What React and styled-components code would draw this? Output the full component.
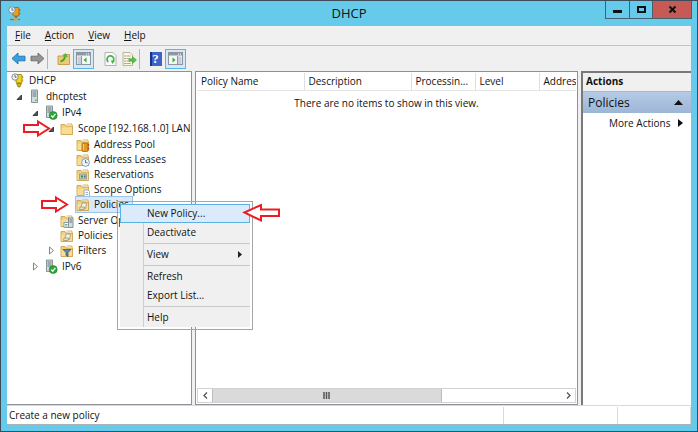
import React from "react";
import styled, { createGlobalStyle } from "styled-components";

const GlobalStyle = createGlobalStyle`
  * {
    box-sizing: border-box;
  }
  body {
    margin: 0;
    font-family: "Open Sans", "Noto Sans", sans-serif;
    font-size: 10px;
    line-height: 15px;
    color: #111;
  }
  button {
    font: inherit;
    color: inherit;
    border: none;
    background: none;
    padding: 0;
    margin: 0;
  }
  svg {
    display: block;
    flex: none;
  }
`;

const Window = styled.div`
  display: flex;
  flex-direction: column;
  min-height: 100vh;
  padding: 0 6px 6px;
  border: 1px solid #3d4c58;
  background: #66cbea;
`;

const TitleBar = styled.header`
  display: grid;
  grid-template-columns: 1fr auto 1fr;
  align-items: center;
  height: 25px;

  h1 {
    margin: 0;
    font-size: 13px;
    font-weight: 400;
  }
`;

const TitleIcon = styled.span`
  padding-left: 1px;
`;

const WindowButtons = styled.div`
  display: flex;
  align-self: start;
  justify-self: end;
  margin-right: -1px;
  border: 1px solid #46606d;
  border-top: none;
`;

const WindowButton = styled.button`
  display: flex;
  align-items: center;
  justify-content: center;
  width: ${(props) => (props.$close ? 39 : 23)}px;
  height: 17px;
  background: ${(props) => (props.$close ? "#c75a55" : "#66cbea")};

  & + & {
    border-left: 1px solid #46606d;
  }
`;

const Client = styled.div`
  display: flex;
  flex-direction: column;
  flex: 1;
  background: #f0f0f0;
`;

const MenuBar = styled.nav`
  display: flex;
  gap: 14px;
  height: 20px;
  padding: 2px 8px;
  border-bottom: 1px solid #c4c4c4;

  button::first-letter {
    text-decoration: underline;
  }
`;

const ToolBar = styled.div`
  display: flex;
  align-items: center;
  gap: 6px;
  height: 25px;
  padding: 0 2px;
`;

const ToolGroup = styled.div`
  display: flex;

  &:not(:last-child) {
    border-right: 1px solid ${(props) => (props.$divided ? "#b5b5b5" : "transparent")};
  }
`;

const ToolButton = styled.button`
  display: flex;
  align-items: center;
  justify-content: center;
  width: ${(props) => (props.$pressed ? 21 : 19)}px;
  height: 20px;
  border: 1px solid ${(props) => (props.$pressed ? "#5bb4e5" : "transparent")};
  background: ${(props) => (props.$pressed ? "#d4e9f8" : "transparent")};
`;

const Panes = styled.div`
  display: grid;
  grid-template-columns: 185px minmax(0, 1fr) 110px;
  gap: 3px;
  flex: 1;
`;

const Pane = styled.section`
  display: flex;
  flex-direction: column;
  min-width: 0;
  background: #fff;
  border: 1px solid #8d9299;
`;

const TreePane = styled(Pane)`
  border-left: none;
`;

const ListPane = styled(Pane)`
  padding: 1px;
`;

const ActionsPane = styled(Pane)`
  border-width: 2px 0 0 2px;
  border-color: #77797c;
`;

const Branch = styled.ul`
  list-style: none;
  margin: 0;
  padding: 1px 0 1px ${(props) => props.$indent}px;
`;

const Row = styled.div`
  position: relative;
  display: flex;
  align-items: center;
  height: 15px;
  white-space: nowrap;
`;

const Twisty = styled.button`
  display: flex;
  align-items: center;
  flex: none;
  width: 12px;
  height: 15px;
`;

const TwistySpace = styled.span`
  flex: none;
  width: 12px;
`;

const NodeLabel = styled.span`
  display: flex;
  align-items: center;
  gap: 4px;
  height: 15px;
  padding-right: 3px;
  background: ${(props) => (props.$selected ? "#d9e9fb" : "none")};
  box-shadow: ${(props) => (props.$selected ? "0 0 0 1px #9cc3ea" : "none")};
`;

const Callout = styled.svg`
  position: absolute;
  z-index: 3;
  top: -1px;
  left: ${(props) => props.$left}px;
  overflow: visible;
`;

const ContextMenu = styled.div`
  position: absolute;
  z-index: 2;
  top: 4px;
  left: 53px;
  width: 136px;
  padding: 2px;
  border: 1px solid #a5a5a5;
  background: linear-gradient(to right, #f0f0f0 23px, #cfcfcf 23px, #cfcfcf 24px, #f0f0f0 24px)
    content-box #f0f0f0;
`;

const ContextItem = styled.button`
  display: flex;
  align-items: center;
  justify-content: space-between;
  width: 100%;
  height: 19px;
  padding: 0 7px 0 27px;
  text-align: left;
  background: ${(props) => (props.$active ? "#dcebfc" : "transparent")};
  box-shadow: ${(props) => (props.$active ? "inset 0 0 0 1px #5bb1e2" : "none")};
`;

const ContextDivider = styled.hr`
  height: 1px;
  margin: 1px 0 1px 24px;
  border: none;
  background: #c9c9c9;
`;

const PointerSpot = styled.div`
  position: absolute;
  top: 3px;
  left: 125px;
`;

const ListTable = styled.table`
  width: 100%;
  table-layout: fixed;
  border-collapse: collapse;

  th {
    height: 17px;
    padding: 0 0 0 4px;
    overflow: hidden;
    font-weight: 400;
    text-align: left;
    white-space: nowrap;
    border-right: 1px solid #dedede;
    border-bottom: 1px solid #e4e4e4;
  }
  th:last-child {
    border-right: none;
  }
  td {
    padding: 5px 0 0;
    text-align: center;
  }
`;

const ScrollBar = styled.div`
  display: flex;
  height: 15px;
  margin-top: auto;
  border: 1px solid #d2d2d2;
`;

const ScrollButton = styled.button`
  display: flex;
  align-items: center;
  justify-content: center;
  width: 14px;
`;

const ScrollThumb = styled.div`
  display: flex;
  align-items: center;
  justify-content: center;
  width: 61%;
  margin-right: auto;
  border: solid #bdbdbd;
  border-width: 0 1px;
  background: #dadada;
`;

const ActionsTitle = styled.h2`
  margin: 0;
  padding: 1px 3px 2px;
  font-size: 10px;
  font-weight: 700;
  line-height: 15px;
  background: #f0f0f0;
  border-bottom: 1px solid #b5b5b5;
`;

const ActionsGroup = styled.button`
  display: flex;
  align-items: center;
  justify-content: space-between;
  height: 21px;
  padding: 0 8px 0 5px;
  font-size: 12px;
  background: linear-gradient(#b5cbe6, #9cb6d6);
`;

const ActionsLink = styled.button`
  display: flex;
  align-items: center;
  justify-content: space-between;
  height: 20px;
  padding: 0 8px 0 26px;
`;

const StatusBar = styled.footer`
  display: grid;
  grid-template-columns: minmax(0, 1fr) 114px 73px;
  height: 20px;
  padding-top: 1px;
  border-top: 1px solid #d8d8d8;
  border-bottom: 1px solid #a9b4b9;
  background: #fff;

  span {
    padding: 1px 2px;
    border-right: 1px solid #d9d9d9;
  }
`;

const FOLDER_EDGE = "#c99b3e";

function Folder({ badge }) {
  return (
    <svg width="14" height="14" viewBox="0 0 14 14">
      <path d="M1 2.500h4l1 1.500h6.500v8.500H1z" fill="#f1cf7c" stroke={FOLDER_EDGE} strokeWidth=".8" />
      <path d="M6.500 2h5.500v2" fill="#fff6d8" stroke={FOLDER_EDGE} strokeWidth=".7" />
      <path d="M1.500 5.500h10.500v6.500H1.500z" fill="#f9dd94" />
      {badge === "pool" && (
        <g>
          <rect x="6" y="5" width="6" height="8.500" rx="1" fill="#e29a20" stroke="#99600e" strokeWidth=".7" />
          <path d="M12.500 6v2M12.500 9.500v2" stroke="#c3462a" strokeWidth="1.400" />
          <path d="M7.500 6v6" stroke="#f9cf6d" />
        </g>
      )}
      {badge === "clock" && (
        <g>
          <circle cx="9.500" cy="9.500" r="3.900" fill="#eef6fd" stroke="#7290a8" strokeWidth=".9" />
          <path d="M9.500 7v2.700h2" fill="none" stroke="#3c6688" strokeWidth=".9" />
        </g>
      )}
      {badge === "card" && (
        <g>
          <rect x="3.500" y="6" width="7" height="5" fill="#b9cbb2" stroke="#7f9790" strokeWidth=".8" />
          <rect x="5" y="7.500" width="2" height="2" fill="#3f8f4e" />
          <rect x="8" y="7.500" width="1.500" height="2" fill="#4670a8" />
        </g>
      )}
      {badge === "page" && (
        <g>
          <path d="M8 7h4l1.500 1.500V13.500H8z" fill="#fafafa" stroke="#8e98a8" strokeWidth=".8" />
          <path d="M9.500 9.500h2.500M9.500 11.500h2.500" stroke="#8fa4c4" strokeWidth=".8" />
        </g>
      )}
      {badge === "policy" && (
        <g>
          <path d="M6 5h4.500l-1 5.500H5z" fill="#f3f3ea" stroke="#9d9678" strokeWidth=".8" />
          <path d="M4 9h4.500l-.5 2.500H3.500z" fill="#e4e4d6" stroke="#9d9678" strokeWidth=".8" />
        </g>
      )}
      {badge === "server" && (
        <g>
          <rect x="8.500" y="4" width="4.500" height="9.500" fill="#d3dbdf" stroke="#6f7c84" strokeWidth=".8" />
          <path d="M9.500 6h2.500M9.500 8h2.500" stroke="#53666f" strokeWidth=".9" />
          <rect x="4" y="8.500" width="4.500" height="5" fill="#fff" stroke="#7c8b99" strokeWidth=".8" />
          <path d="M5 10.500h2.500M5 12h2.500" stroke="#4f9c5b" strokeWidth=".8" />
        </g>
      )}
      {badge === "filter" && (
        <path d="M3 5.500h8L8 8.500v4l-2-1V8.500z" fill="#6288ad" stroke="#385674" strokeWidth=".8" />
      )}
    </svg>
  );
}

function Server({ ok }) {
  return (
    <svg width="14" height="15" viewBox="0 0 14 15">
      <path
        d={ok ? "M2.500 1h6v11.500h-6z" : "M3.500 1h6v12.500h-6z"}
        fill="#d5dcdf"
        stroke="#7c898f"
        strokeWidth=".9"
      />
      <path
        d={ok ? "M3.500 3h4M3.500 5h4M3.500 7h4" : "M4.500 3h4M4.500 5h4M4.500 7h4"}
        stroke="#586b75"
        strokeWidth=".9"
      />
      {!ok && <rect x="7" y="10.500" width="1.500" height="1.500" fill="#56b947" />}
      {ok && (
        <g>
          <circle cx="9.200" cy="10.500" r="4" fill="#2da637" stroke="#1c7f28" strokeWidth=".6" />
          <path d="M7.200 10.600l1.500 1.700 2.700-3.400" fill="none" stroke="#fff" strokeWidth="1.300" />
        </g>
      )}
    </svg>
  );
}

function DhcpIcon({ network }) {
  return (
    <svg width="14" height="15" viewBox="0 0 14 15">
      <rect
        x="5"
        y="1.500"
        width="6"
        height="8.500"
        rx="1"
        fill={network ? "#e9a01f" : "#f3d31f"}
        stroke={network ? "#9b650e" : "#8d7a0c"}
        strokeWidth=".8"
      />
      <path d="M11.500 3v2M11.500 6.500v2" stroke={network ? "#d45a24" : "#c4a414"} strokeWidth="1.500" />
      <path d="M8 10v3" stroke="#5c6670" strokeWidth="1.600" />
      {network ? (
        <g>
          <path d="M2 13.500h10" stroke="#8d6d4b" strokeWidth="1.200" />
          <rect x="6" y="12" width="4" height="2.500" fill="#e3a23c" />
        </g>
      ) : (
        <path d="M5.500 10.500h5l-1.500 3.500H7z" fill="#cdb41b" stroke="#7c6a0c" strokeWidth=".6" />
      )}
      <circle cx="4" cy="4" r="3.200" fill="#f2f5f8" stroke="#76828d" strokeWidth=".9" />
      <path d="M4 2v2.200h1.600" fill="none" stroke="#4a5d6d" strokeWidth=".9" />
    </svg>
  );
}

function NavArrow({ forward }) {
  return (
    <svg width="15" height="13" viewBox="0 0 15 13">
      <path
        d="M1 6.500L7 1v3.200h7v4.600H7V12z"
        fill={forward ? "#949494" : "#35a3e0"}
        stroke={forward ? "#6c6c6c" : "#1d72b5"}
        strokeWidth=".9"
        strokeLinejoin="round"
        transform={forward ? "matrix(-1 0 0 1 15 0)" : undefined}
      />
    </svg>
  );
}

function UpFolder() {
  return (
    <svg width="14" height="14" viewBox="0 0 14 14">
      <path d="M1 4h4.500l1-1.500H12.500v10H1z" fill="#eccb75" stroke="#bb953e" strokeWidth=".8" />
      <path d="M3.500 9.500C6 9 7.500 7 8 4.500" fill="none" stroke="#3fa72b" strokeWidth="1.800" />
      <path d="M5.500 4.500L8.500 1l2.500 4z" fill="#4dbb34" />
    </svg>
  );
}

function PaneToggle({ right }) {
  return (
    <svg width="15" height="13" viewBox="0 0 15 13">
      <rect x=".5" y=".5" width="14" height="12" fill="#f6f6f6" stroke="#8d959e" />
      <path d="M1 1h13v2.500H1z" fill="#8e98a3" />
      <path d="M10 2h1M12 2h1" stroke="#fff" />
      <path d={right ? "M10 4.500h3.500v7.500H10z" : "M1.500 4.500H5v7.500H1.500z"} fill="#c6ced8" />
      <path d={right ? "M9.500 4v8.500" : "M5.500 4v8.500"} stroke="#8d959e" />
      <path d={right ? "M4.500 5.500v5l3-2.500z" : "M10.500 5.500v5l-3-2.500z"} fill="#35b132" />
    </svg>
  );
}

function RefreshPage() {
  return (
    <svg width="13" height="14" viewBox="0 0 13 14">
      <path d="M1 .5h8l3 3v10H1z" fill="#fbfbfb" stroke="#a2a2a2" strokeWidth=".8" />
      <path d="M4.300 10A3.400 3.400 0 1 1 9 9.500" fill="none" stroke="#41b53c" strokeWidth="1.700" />
      <path d="M6.800 8.500l4 .2-2.300 3.300z" fill="#41b53c" />
    </svg>
  );
}

function ExportPage() {
  return (
    <svg width="15" height="14" viewBox="0 0 15 14">
      <path d="M1 .5h7l2.500 2.500v10.500H1z" fill="#fbf6dc" stroke="#a9a48c" strokeWidth=".8" />
      <path d="M2.500 4h1M2.500 6.500h1M2.500 9h1M2.500 11.500h1" stroke="#555" />
      <path d="M4.500 4h4M4.500 6.500h3M4.500 9h3M4.500 11.500h4" stroke="#a4a4a4" />
      <path d="M7 6.800h3.500V4.500l4 3.500-4 3.500V9.300H7z" fill="#58c33f" stroke="#369a28" strokeWidth=".5" />
    </svg>
  );
}

const HelpMark = styled.span`
  width: 12px;
  height: 14px;
  font-family: "Liberation Serif", serif;
  font-size: 13px;
  font-weight: 700;
  line-height: 14px;
  text-align: center;
  color: #fff;
  background: linear-gradient(to right, #18338a 2px, #3d62cc 2px);
`;

function Expander({ open }) {
  return (
    <Twisty aria-label={open ? "Collapse" : "Expand"}>
      <svg width="7" height="9" viewBox="0 0 7 9">
        {open ? (
          <path d="M5.500 3v4.500H1z" fill="#555" stroke="#222" strokeWidth=".8" />
        ) : (
          <path d="M1.500 1v7l4-3.500z" fill="#fff" stroke="#777" strokeWidth=".9" />
        )}
      </svg>
    </Twisty>
  );
}

function RedArrow({ left, flip }) {
  return (
    <Callout
      $left={left}
      width={flip ? 38 : 27}
      height="17"
      viewBox={flip ? "0 0 38 17" : "0 0 27 17"}
      aria-hidden="true"
    >
      <path
        d={flip ? "M1.500 8.500L18 1v4.500h18v6.500H18v4.500z" : "M1 5h14V1.500l11 7-11 7V12H1z"}
        fill="#fff"
        stroke="#ed1c24"
        strokeWidth="2"
      />
    </Callout>
  );
}

const menuItems = [
  { label: "New Policy...", active: true },
  { label: "Deactivate" },
  { divider: true },
  { label: "View", submenu: true },
  { divider: true },
  { label: "Refresh" },
  { label: "Export List..." },
  { divider: true },
  { label: "Help" },
];

function PolicyMenu() {
  return (
    <ContextMenu role="menu">
      {menuItems.map((item, index) =>
        item.divider ? (
          <ContextDivider key={index} />
        ) : (
          <ContextItem key={index} role="menuitem" $active={item.active}>
            {item.label}
            {item.submenu && (
              <svg width="5" height="7" viewBox="0 0 5 7">
                <path d="M0 0v7l4-3.500z" fill="#222" />
              </svg>
            )}
          </ContextItem>
        )
      )}
      <PointerSpot>
        <RedArrow left={0} flip />
      </PointerSpot>
    </ContextMenu>
  );
}

const tree = {
  label: "DHCP",
  icon: <DhcpIcon />,
  children: [
    {
      label: "dhcptest",
      icon: <Server />,
      open: true,
      children: [
        {
          label: "IPv4",
          icon: <Server ok />,
          open: true,
          children: [
            {
              label: "Scope [192.168.1.0] LAN",
              icon: <Folder />,
              open: true,
              marked: true,
              children: [
                { label: "Address Pool", icon: <Folder badge="pool" /> },
                { label: "Address Leases", icon: <Folder badge="clock" /> },
                { label: "Reservations", icon: <Folder badge="card" /> },
                { label: "Scope Options", icon: <Folder badge="page" /> },
                { label: "Policies", icon: <Folder badge="policy" />, selected: true, marked: true },
              ],
            },
            { label: "Server Options", icon: <Folder badge="server" /> },
            { label: "Policies", icon: <Folder badge="policy" /> },
            { label: "Filters", icon: <Folder badge="filter" />, open: false },
          ],
        },
        { label: "IPv6", icon: <Server ok />, open: false },
      ],
    },
  ],
};

function TreeNode({ node, root }) {
  const hasTwisty = node.open !== undefined;

  return (
    <li>
      <Row>
        {hasTwisty && <Expander open={node.open} />}
        {!hasTwisty && !root && <TwistySpace />}
        <NodeLabel $selected={node.selected}>
          {node.icon}
          {node.label}
        </NodeLabel>
        {node.marked && <RedArrow left={node.selected ? -23 : -25} />}
        {node.selected && <PolicyMenu />}
      </Row>
      {node.children && (
        <Branch $indent={root ? 5 : 16}>
          {node.children.map((child) => (
            <TreeNode key={child.label} node={child} />
          ))}
        </Branch>
      )}
    </li>
  );
}

export default function App() {
  return (
    <>
      <GlobalStyle />
      <Window>
        <TitleBar>
          <TitleIcon>
            <DhcpIcon network />
          </TitleIcon>
          <h1>DHCP</h1>
          <WindowButtons>
            <WindowButton aria-label="Minimize">
              <svg width="9" height="9" viewBox="0 0 9 9">
                <path d="M0 6.500h9" stroke="#111" strokeWidth="3" />
              </svg>
            </WindowButton>
            <WindowButton aria-label="Maximize">
              <svg width="9" height="9" viewBox="0 0 9 9">
                <rect x="1" y="2" width="7" height="5" fill="none" stroke="#111" strokeWidth="2" />
              </svg>
            </WindowButton>
            <WindowButton aria-label="Close" $close>
              <svg width="9" height="9" viewBox="0 0 9 9">
                <path d="M1.500 1.500l6 6M7.500 1.500l-6 6" stroke="#111" strokeWidth="2" />
              </svg>
            </WindowButton>
          </WindowButtons>
        </TitleBar>
        <Client>
          <MenuBar>
            <button>File</button>
            <button>Action</button>
            <button>View</button>
            <button>Help</button>
          </MenuBar>
          <ToolBar>
            <ToolGroup $divided>
              <ToolButton aria-label="Back">
                <NavArrow />
              </ToolButton>
              <ToolButton aria-label="Forward">
                <NavArrow forward />
              </ToolButton>
            </ToolGroup>
            <ToolGroup>
              <ToolButton aria-label="Up one level">
                <UpFolder />
              </ToolButton>
              <ToolButton aria-label="Show console tree" $pressed>
                <PaneToggle />
              </ToolButton>
            </ToolGroup>
            <ToolGroup $divided>
              <ToolButton aria-label="Refresh">
                <RefreshPage />
              </ToolButton>
              <ToolButton aria-label="Export list">
                <ExportPage />
              </ToolButton>
            </ToolGroup>
            <ToolGroup>
              <ToolButton aria-label="Help topics">
                <HelpMark>?</HelpMark>
              </ToolButton>
              <ToolButton aria-label="Show action pane" $pressed>
                <PaneToggle right />
              </ToolButton>
            </ToolGroup>
          </ToolBar>
          <Panes>
            <TreePane>
              <Branch $indent={4}>
                <TreeNode node={tree} root />
              </Branch>
            </TreePane>
            <ListPane>
              <ListTable>
                <colgroup>
                  <col width="107" />
                  <col width="107" />
                  <col width="64" />
                  <col width="64" />
                  <col />
                </colgroup>
                <thead>
                  <tr>
                    <th>Policy Name</th>
                    <th>Description</th>
                    <th>Processin...</th>
                    <th>Level</th>
                    <th>Addres</th>
                  </tr>
                </thead>
                <tbody>
                  <tr>
                    <td colSpan="5">There are no items to show in this view.</td>
                  </tr>
                </tbody>
              </ListTable>
              <ScrollBar>
                <ScrollButton aria-label="Scroll left">
                  <svg width="5" height="7" viewBox="0 0 5 7">
                    <path d="M4 .5l-3 3 3 3" fill="none" stroke="#555" strokeWidth="1.300" />
                  </svg>
                </ScrollButton>
                <ScrollThumb>
                  <svg width="7" height="7" viewBox="0 0 7 7">
                    <path d="M1 0v7M3.500 0v7M6 0v7" stroke="#555" strokeWidth="1.500" />
                  </svg>
                </ScrollThumb>
                <ScrollButton aria-label="Scroll right">
                  <svg width="5" height="7" viewBox="0 0 5 7">
                    <path d="M1 .5l3 3-3 3" fill="none" stroke="#555" strokeWidth="1.300" />
                  </svg>
                </ScrollButton>
              </ScrollBar>
            </ListPane>
            <ActionsPane>
              <ActionsTitle>Actions</ActionsTitle>
              <ActionsGroup>
                Policies
                <svg width="9" height="5" viewBox="0 0 9 5">
                  <path d="M0 5h9L4.500 0z" fill="#111" />
                </svg>
              </ActionsGroup>
              <ActionsLink>
                More Actions
                <svg width="5" height="8" viewBox="0 0 5 8">
                  <path d="M0 0v8l5-4z" fill="#111" />
                </svg>
              </ActionsLink>
            </ActionsPane>
          </Panes>
          <StatusBar>
            <span>Create a new policy</span>
            <span />
            <span />
          </StatusBar>
        </Client>
      </Window>
    </>
  );
}
